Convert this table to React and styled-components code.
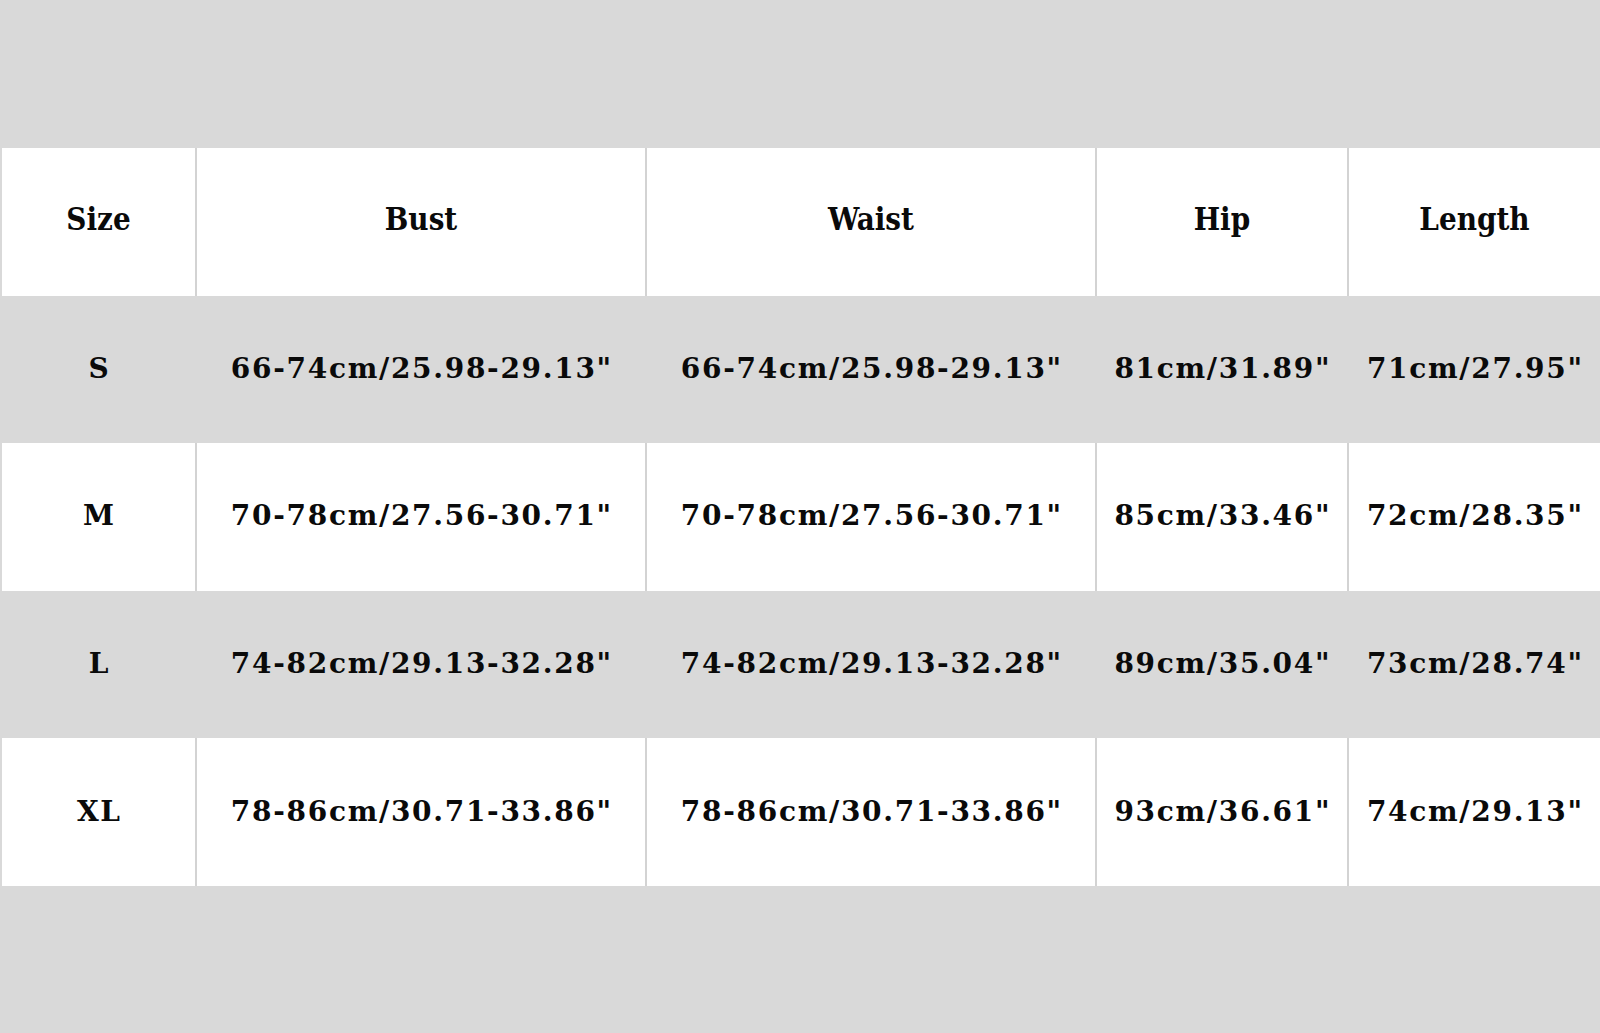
import React from 'react';
import styled, { createGlobalStyle } from 'styled-components';

const GlobalStyle = createGlobalStyle`
    html, body {
        margin: 0;
        padding: 0;
        background: #d9d9d9;
    }
    body {
        width: 1600px;
        height: 1033px;
        overflow: hidden;
    }
`;

const Page = styled.div`
    width: 1600px;
    height: 1033px;
    background: #d9d9d9;
    padding-top: 148px;
    box-sizing: border-box;
`;

const Table = styled.div`
    display: flex;
    flex-direction: column;
    padding-left: 2px;
`;

const Row = styled.div`
    display: grid;
    grid-template-columns: 193px 450px 450px 252px 1fr;
    height: 147.6px;
    background: ${(p) => (p.$shaded ? '#d9d9d9' : '#ffffff')};
`;

const Cell = styled.div`
    display: flex;
    align-items: center;
    justify-content: center;
    border-left: ${(p) => (p.$first ? 'none' : '2px solid')};
    border-color: ${(p) => (p.$shaded ? '#d9d9d9' : '#d3d3d3')};
    color: #0a0a0a;
    white-space: nowrap;
`;

const HeadText = styled.span`
    font-family: "DejaVu Serif", "Liberation Serif", serif;
    font-weight: bold;
    font-stretch: condensed;
    font-size: 31px;
    padding-bottom: 6px;
`;

const DataText = styled.span`
    font-family: "DejaVu Serif", "Liberation Serif", serif;
    font-weight: bold;
    font-size: 28px;
    letter-spacing: 1.7px;
    padding-bottom: 2px;
    padding-left: 1.7px;
`;

const headers = ['Size', 'Bust', 'Waist', 'Hip', 'Length'];

const rows = [
    ['S', '66-74cm/25.98-29.13"', '66-74cm/25.98-29.13"', '81cm/31.89"', '71cm/27.95"'],
    ['M', '70-78cm/27.56-30.71"', '70-78cm/27.56-30.71"', '85cm/33.46"', '72cm/28.35"'],
    ['L', '74-82cm/29.13-32.28"', '74-82cm/29.13-32.28"', '89cm/35.04"', '73cm/28.74"'],
    ['XL', '78-86cm/30.71-33.86"', '78-86cm/30.71-33.86"', '93cm/36.61"', '74cm/29.13"'],
];

export default function App() {
    return (
        <Page>
            <GlobalStyle />
            <Table>
                <Row>
                    {headers.map((h, i) => (
                        <Cell key={h} $first={i === 0}>
                            <HeadText>{h}</HeadText>
                        </Cell>
                    ))}
                </Row>
                {rows.map((r, ri) => {
                    const shaded = ri % 2 === 0;
                    return (
                        <Row key={r[0]} $shaded={shaded}>
                            {r.map((v, i) => (
                                <Cell key={i} $first={i === 0} $shaded={shaded}>
                                    <DataText>{v}</DataText>
                                </Cell>
                            ))}
                        </Row>
                    );
                })}
            </Table>
        </Page>
    );
}
